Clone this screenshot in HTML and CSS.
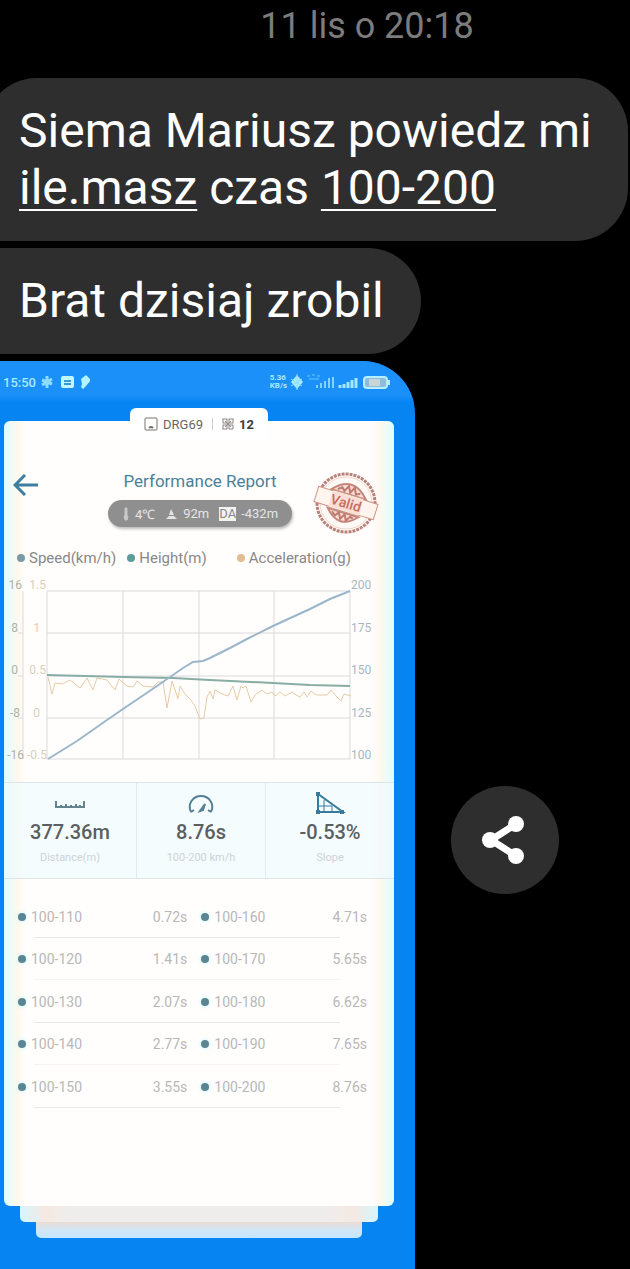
FILE: index.html
```html
<!DOCTYPE html>
<html lang="pl">
<head>
    <meta charset="UTF-8">
    <meta name="viewport" content="width=device-width, initial-scale=1.0">
    <title>Messages</title>
    <link rel="stylesheet" href="styles.css">
</head>
<body>
    <main class="chat">
        <time class="timestamp">11 lis o 20:18</time>

        <p class="bubble first">Siema Mariusz powiedz mi <a href="#">ile.masz</a> czas <a href="#">100-200</a></p>
        <p class="bubble">Brat dzisiaj zrobil</p>

        <div class="attachment">
            <div class="screen">
                <!-- Phone status bar -->
                <div class="status-bar">
                    <span>15:50</span>
                    <svg width="50" height="16" viewBox="0 0 50 16">
                        <path d="M7 2v12M2 6l10 4M12 5L2 11" stroke="#8fdcff" stroke-width="3"/>
                        <rect x="21" y="2" width="13" height="12" rx="2" fill="#c4f6ff"/>
                        <path d="M24 7h7M24 10h7" stroke="#3a9ad8" stroke-width="2"/>
                        <path d="M46 1l5 5-5 6-3 3-2-2 1-3-1-5z" fill="#b4f4ff"/>
                    </svg>
                    <div class="status-right">
                        <div class="net-speed">5.36<br>KB/s</div>
                        <svg width="102" height="18" viewBox="0 0 102 18">
                            <path d="M8 2l6 7-6 7-6-7z" fill="#a5eaff"/>
                            <path d="M8 1v16M2 6l11 7M13 6L2 13" stroke="#8fe0ff"/>
                            <path d="M18 3h3M23 2h3M28 3h3M20 6h10" stroke="#6bc6ff"/>
                            <path d="M28 15v-3M32 15v-5M36 15V8M40 15V5M44 15V4" stroke="#82d4ff" stroke-width="2"/>
                            <path d="M51 15v-3M55 15v-4M59 15V9M63 15V7M67 15V5" stroke="#a4e9ff" stroke-width="3"/>
                            <rect x="75" y="4" width="23" height="11" rx="3" fill="#8cbde0" stroke="#b6f0ff" stroke-width="2"/>
                            <rect x="80" y="6" width="11" height="7" fill="#c9d6d6"/>
                            <path d="M100 7v5" stroke="#b6f0ff" stroke-width="2"/>
                        </svg>
                    </div>
                </div>

                <div class="deck">
                    <div class="tab">
                        <svg width="14" height="14" viewBox="0 0 14 14" fill="none" stroke="#77716e">
                            <rect x="1" y="1" width="12" height="12" rx="1"/>
                            <path d="M5 11q2-2 4 0" stroke-width="2"/>
                        </svg>
                        <span>DRG69</span>
                        <i class="tab-line"></i>
                        <svg width="12" height="12" viewBox="0 0 12 12" fill="none" stroke="#8b8583">
                            <rect x="1" y="1" width="4" height="4"/>
                            <rect x="7" y="1" width="4" height="4"/>
                            <rect x="1" y="7" width="4" height="4"/>
                            <path d="M7 7h4v4H7zM3 3l6 6M9 3L3 9"/>
                        </svg>
                        <b>12</b>
                    </div>

                    <section class="card">
                        <header class="report-head">
                            <button class="back" type="button" aria-label="Back">
                                <svg width="26" height="22" viewBox="0 0 26 22" fill="none" stroke="#3e7fa0" stroke-width="3">
                                    <path d="M25 11H2M12 1L2 11l10 10"/>
                                </svg>
                            </button>
                            <div class="head-text">
                                <h1>Performance Report</h1>
                                <div class="pill">
                                    <svg width="8" height="14" viewBox="0 0 8 14">
                                        <path d="M3 1h2v7l1 2-1 3H3l-1-3 1-2z" fill="#ccc" stroke="#c4c4c4"/>
                                    </svg>
                                    <span>4℃</span>
                                    <svg class="peak" width="13" height="12" viewBox="0 0 13 12">
                                        <path d="M6 1l3 6H4zM1 11l3-3h5l3 3z" fill="#e4e4e4"/>
                                    </svg>
                                    <span>92m</span>
                                    <span class="da">DA</span>
                                    <span>-432m</span>
                                </div>
                            </div>
                            <svg class="stamp" width="66" height="66" viewBox="0 0 66 66">
                                <circle cx="33" cy="33" r="29" fill="#fffaf6" stroke="#b98178" stroke-width="3" stroke-dasharray="3 1"/>
                                <circle cx="33" cy="33" r="26" fill="none" stroke="#f3d5ca"/>
                                <g transform="rotate(17 33 33)">
                                    <path d="M15 24q18-20 36 0zM17 43q16 18 32 0z" fill="#f8e0d8" stroke="#c4857b" stroke-width="2"/>
                                    <path d="M21 22l4-3 3 3 3-6 3 6 3-6 3 6 4-2M22 45l4 3 3-4 3 6 3-6 3 6 3-5 3 1" fill="none" stroke="#c27a70" stroke-width="2"/>
                                    <path d="M2 25h15v-1h32v1h15v16H49v1H17v-1H2z" fill="#fff5ef" stroke="#cf9387"/>
                                    <path d="M17 25h32v16H17z" fill="#f9dfd6"/>
                                    <text x="33" y="38" text-anchor="middle">Valid</text>
                                </g>
                            </svg>
                        </header>

                        <ul class="legend">
                            <li class="speed">Speed(km/h)</li>
                            <li class="height">Height(m)</li>
                            <li class="accel">Acceleration(g)</li>
                        </ul>

                        <svg class="chart" viewBox="0 0 390 207">
                            <path class="grid" d="M43 16h303M43 58h303M43 101h303M43 143h303M43 184h303M43 16v168M119 16v168M195 16v168M270 16v168M346 16v168M19 16v168M14 58h5M14 101h5M14 143h5"/>
                            <path class="line-accel" d="M44 102l4 17 3-11 7 1 8-4 10 8 7-10 6 12 4-12 10 2 8 10 4-11 8 7 6 1 4-6 6 5 10 1 5-5 5 0 4 26 5-27 6 18 2-13 5 8 5 5 5 7 5 13 4-1 3-21 3-6 3 8 2-9 7 4 6 2 5-10 4 14 4-14 2 2 3-2 5 16 4-7 7-5 5 4 5-2 3 4 5-4 5 4 7-4 4 3 4 2 4-5 3 5 4-6 5 4h11l4-5 5 6 5 5 3-7 7 2"/>
                            <polyline class="line-height" points="43,100 119,102 169,103 206,105 269,108 306,110 346,111"/>
                            <polyline class="line-speed" points="44,184 73,166 103,145 119,134 153,111 169,100 179,93 189,87 199,86 206,83 226,73 243,64 269,51 306,34 326,24 346,16"/>
                            <g class="axis-far">
                                <text x="18" y="14">16</text>
                                <text x="14" y="57">8</text>
                                <text x="14" y="99">0</text>
                                <text x="16" y="142">-8</text>
                                <text x="20" y="184">-16</text>
                            </g>
                            <g class="axis-left">
                                <text x="42" y="14">1.5</text>
                                <text x="36" y="57">1</text>
                                <text x="42" y="99">0.5</text>
                                <text x="36" y="142">0</text>
                                <text x="43" y="184">-0.5</text>
                            </g>
                            <g class="axis-right">
                                <text x="347" y="14">200</text>
                                <text x="347" y="57">175</text>
                                <text x="347" y="99">150</text>
                                <text x="347" y="142">125</text>
                                <text x="347" y="184">100</text>
                            </g>
                        </svg>

                        <div class="stats">
                            <div class="stat">
                                <svg width="32" height="24" viewBox="0 0 32 24" fill="none" stroke="#62838f" stroke-width="2">
                                    <path d="M2 9v6h28V9M7 15v-2M12 15v-3M17 15v-2M22 15v-3M26 15v-2"/>
                                </svg>
                                <strong>377.36m</strong>
                                <small>Distance(m)</small>
                            </div>
                            <div class="stat">
                                <svg width="32" height="24" viewBox="0 0 32 24" fill="none" stroke="#557f93" stroke-width="2">
                                    <path d="M6 20C2 12 8 4 16 4s14 8 10 16M6 20l3-2M26 20l-3-2"/>
                                    <path d="M20 12l-5 7 3-1z" fill="#557f93"/>
                                </svg>
                                <strong>8.76s</strong>
                                <small>100-200 km/h</small>
                            </div>
                            <div class="stat">
                                <svg width="32" height="24" viewBox="0 0 32 24" fill="none" stroke="#377a9d" stroke-width="2">
                                    <path d="M4 2v18h25z"/>
                                    <path d="M4 14h6v6M10 8v6h8v6" stroke-width="1"/>
                                    <path d="M2 0h4v4H2zM2 18h4v4H2zM26 18h4v4h-4z" fill="#377a9d" stroke="none"/>
                                </svg>
                                <strong>-0.53%</strong>
                                <small>Slope</small>
                            </div>
                        </div>

                        <table class="splits">
                            <tr><td class="range">100-110</td><td class="sec">0.72s</td><td class="range">100-160</td><td class="sec">4.71s</td></tr>
                            <tr><td class="range">100-120</td><td class="sec">1.41s</td><td class="range">100-170</td><td class="sec">5.65s</td></tr>
                            <tr><td class="range">100-130</td><td class="sec">2.07s</td><td class="range">100-180</td><td class="sec">6.62s</td></tr>
                            <tr><td class="range">100-140</td><td class="sec">2.77s</td><td class="range">100-190</td><td class="sec">7.65s</td></tr>
                            <tr><td class="range">100-150</td><td class="sec">3.55s</td><td class="range">100-200</td><td class="sec">8.76s</td></tr>
                        </table>
                    </section>
                    <div class="sheet"></div>
                    <div class="sheet last"></div>
                </div>
            </div>

            <button class="share" type="button" aria-label="Share">
                <svg width="48" height="52" viewBox="0 0 48 52">
                    <path d="M35 10L10 26l25 16" fill="none" stroke="#fff" stroke-width="7"/>
                    <circle cx="35" cy="10" r="8" fill="#fff"/>
                    <circle cx="9" cy="26" r="8" fill="#fff"/>
                    <circle cx="35" cy="42" r="8" fill="#fff"/>
                </svg>
            </button>
        </div>
    </main>
</body>
</html>
```
FILE: styles.css
```css
* {
    box-sizing: border-box;
}
body {
    margin: 0;
    background: #000;
    font-family: Roboto, sans-serif;
    overflow-x: hidden;
}
.chat {
    display: flex;
    flex-direction: column;
    align-items: flex-start;
    min-height: 100vh;
}
.timestamp {
    width: 100%;
    padding-left: 104px;
    margin: 4px 0 30px;
    text-align: center;
    font-size: 36px;
    line-height: 44px;
    color: #7c7c7c;
}
.bubble {
    margin: 0 0 7px -16px;
    padding: 24px 37px 25px 35px;
    background: #2e2e2e;
    border-radius: 10px 53px 53px 10px;
    color: #fff;
    font-size: 48px;
    line-height: 57px;
}
.bubble.first {
    width: calc(100% + 14px);
    padding-right: 30px;
    border-radius: 53px 53px 53px 10px;
}
.bubble a {
    color: #fff;
    text-decoration: underline;
    text-decoration-thickness: 2px;
    text-underline-offset: 5px;
}

/* Picture message */
.attachment {
    display: flex;
    flex: 1;
    gap: 36px;
    align-items: center;
    width: 100%;
}
.screen {
    width: 66%;
    max-width: 415px;
    align-self: stretch;
    background: #0584f2;
    border-top-right-radius: 53px;
    overflow: hidden;
}
.status-bar {
    display: flex;
    align-items: center;
    gap: 4px;
    height: 42px;
    padding: 0 24px 0 3px;
    background: linear-gradient(#1b90f8 34px, #0584f2);
    color: #a9eaff;
    font-size: 13px;
    font-weight: 500;
}
.status-right {
    display: flex;
    align-items: center;
    gap: 2px;
    margin-left: auto;
}
.net-speed {
    font-size: 8px;
    line-height: 8px;
    font-weight: bold;
}
.deck {
    padding: 5px 21px 30px 4px;
}
.tab {
    position: relative;
    display: flex;
    align-items: center;
    justify-content: center;
    gap: 5px;
    width: 138px;
    height: 32px;
    margin: 0 auto -19px;
    background: #fff;
    border-radius: 6px;
    color: #6b6562;
    font-size: 13px;
}
.tab b {
    color: #3c3c3c;
}
.tab-line {
    width: 1px;
    height: 12px;
    margin: 0 4px;
    background: #ccc;
}
.card {
    height: 785px;
    padding-top: 49px;
    background: linear-gradient(to right, #dcfeff, #fff8ee 14px, #fffefd 22px, #fffefd calc(100% - 22px), #fff8ee calc(100% - 14px), #dcfeff);
    border-radius: 6px;
}
.report-head {
    display: flex;
    justify-content: space-between;
    padding: 0 15px 0 9px;
}
.back {
    align-self: flex-start;
    width: 74px;
    margin-top: 4px;
    padding: 0;
    border: none;
    background: none;
    text-align: left;
    cursor: pointer;
}
.head-text {
    display: flex;
    flex-direction: column;
    align-items: center;
}
.head-text h1 {
    margin: 0 0 8px;
    font-size: 17px;
    line-height: 22px;
    font-weight: 400;
    color: #4a8199;
}
.pill {
    display: flex;
    align-items: center;
    justify-content: center;
    gap: 5px;
    width: 184px;
    height: 27px;
    border-radius: 14px;
    background: #8f8f8f;
    box-shadow: 1px 2px 3px #bbb;
    color: #e6e6e6;
    font-size: 13px;
}
.peak {
    margin-left: 5px;
}
.da {
    margin-left: 5px;
    background: #f2f2f2;
    color: #888;
    line-height: 14px;
}
.stamp text {
    font-size: 14px;
    font-weight: 500;
    fill: #c96b61;
}
.legend {
    display: flex;
    margin: 12px 0 0;
    padding: 0 13px;
    list-style: none;
    font-size: 15px;
    line-height: 20px;
    color: #8b8788;
}
.legend li::before {
    content: "";
    display: inline-block;
    width: 8px;
    height: 8px;
    margin-right: 4px;
    border-radius: 50%;
    background: #7b9ba4;
    vertical-align: 1px;
}
.legend .height {
    margin-left: 11px;
}
.legend .height::before {
    background: #5d9c98;
}
.legend .accel {
    margin-left: auto;
    margin-right: 30px;
}
.legend .accel::before {
    background: #e2bd94;
}

/* Chart */
.chart {
    display: block;
    width: 100%;
    margin-top: 7px;
    font-size: 12px;
}
.chart path,
.chart polyline {
    fill: none;
}
.grid {
    stroke: #dcd9dd;
}
.chart .line-accel {
    stroke: #e8cba8;
    fill: none;
}
.line-height {
    stroke: #88ada3;
    stroke-width: 2;
}
.line-speed {
    stroke: #9bb6c9;
    stroke-width: 2;
}
.axis-far {
    fill: #b0b2a6;
    text-anchor: end;
}
.axis-left {
    fill: #d9ceb9;
    text-anchor: end;
}
.axis-right {
    fill: #a5b8c2;
}

/* Totals */
.stats {
    display: grid;
    grid-template-columns: 132px 1fr 1fr;
    border-top: 1px solid #dce6e8;
    border-bottom: 1px solid #dce6e8;
}
.stat {
    display: flex;
    flex-direction: column;
    align-items: center;
    height: 95px;
    padding-top: 9px;
    background: #eefaff99;
}
.stat + .stat {
    border-left: 1px solid #dfebee;
}
.stat strong {
    margin-top: 4px;
    font-size: 20px;
    line-height: 24px;
    font-weight: 500;
    color: #5a5f61;
}
.stat small {
    margin-top: 7px;
    font-size: 11px;
    line-height: 14px;
    color: #ccd3d4;
}

/* Split times */
.splits {
    width: 100%;
    margin-top: 16px;
    border-collapse: collapse;
    table-layout: fixed;
    font-size: 14px;
    color: #b9b7b7;
}
.splits tr {
    height: 42px;
    background: linear-gradient(#f7f3f2, #f7f3f2) no-repeat 30px 100% / 306px 1px;
}
.splits tr:nth-child(odd) {
    height: 43px;
    background-image: linear-gradient(#eae8e8, #eae8e8);
}
.splits td {
    padding: 0;
}
.splits .range {
    width: 25%;
    padding-left: 14px;
}
.splits .range::before {
    content: "";
    display: inline-block;
    width: 8px;
    height: 8px;
    margin-right: 5px;
    border-radius: 50%;
    background: #5a8592;
    box-shadow: 0 0 5px #bff5ff;
    vertical-align: 1px;
}
.splits .sec {
    width: 22%;
}
.splits .sec {
    text-align: right;
}
.splits .sec:last-child {
    width: 28%;
    padding-right: 27px;
}

/* Pages stacked under the card */
.sheet {
    height: 16px;
    margin: 0 16px;
    border-radius: 0 0 5px 5px;
    background: linear-gradient(to right, #d4f6ff, #f5e9e2 24px, #efedec 50px, #efedec calc(100% - 50px), #f5e9e2 calc(100% - 24px), #d4f6ff);
}
.sheet.last {
    margin: 0 32px;
    background: linear-gradient(#ecdcd4, #cfe6f6 8px, #c3e8ff);
}

.share {
    display: flex;
    align-items: center;
    justify-content: center;
    width: 108px;
    height: 108px;
    margin-top: 50px;
    padding: 0;
    border: none;
    border-radius: 50%;
    background: #2e2e2e;
    cursor: pointer;
}
```
